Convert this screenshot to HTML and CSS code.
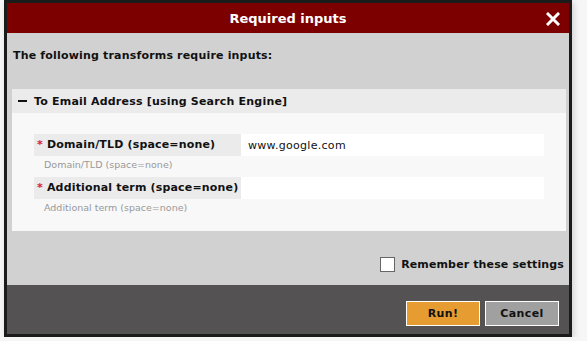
FILE: index.html
```html
<!DOCTYPE html>
<html lang="en">
<head>
  <meta charset="UTF-8" />
  <title>Required inputs</title>
  <link rel="stylesheet" href="styles.css">
</head>
<body>
  <div class="dialog">
    <div class="dialog-header">
      <span class="dialog-title">Required inputs</span>
      <svg class="dialog-close" width="14" height="14" viewBox="0 0 14 14">
        <path d="M2 2 L12 12 M12 2 L2 12" stroke="#fff" stroke-width="3" stroke-linecap="square" />
      </svg>
    </div>

    <div class="dialog-body">
      <p class="intro">The following transforms require inputs:</p>

      <div class="panel">
        <div class="panel-head"><span class="toggle"></span>To Email Address [using Search Engine]</div>
        <div class="panel-body">
          <div class="field">
            <div class="field-row">
              <label class="field-label" for="domain"><span class="req">*</span> Domain/TLD (space=none)</label>
              <input class="field-input" id="domain" type="text" value="www.google.com">
            </div>
            <div class="field-help">Domain/TLD (space=none)</div>
          </div>
          <div class="field">
            <div class="field-row">
              <label class="field-label" for="term"><span class="req">*</span> Additional term (space=none)</label>
              <input class="field-input" id="term" type="text" value="">
            </div>
            <div class="field-help">Additional term (space=none)</div>
          </div>
        </div>
      </div>

      <div class="remember">
        <span class="checkbox"></span>
        <span>Remember these settings</span>
      </div>
    </div>

    <div class="dialog-footer">
      <button class="btn btn-run">Run!</button>
      <button class="btn btn-cancel">Cancel</button>
    </div>
  </div>
</body>
</html>
```

FILE: styles.css
```css
body {
  margin: 0;
  background-color: #f6f6f6;
  font-family: 'DejaVu Sans', Verdana, sans-serif;
  color: #111;
}
.dialog {
  width: 562px;
  height: 331px;
  margin: 0 0 0 4px;
  border: 3px solid #1b1b1b;
  display: flex;
  flex-direction: column;
  box-shadow: 2px 2px 6px rgba(0, 0, 0, 0.15);
}
.dialog-header {
  height: 30px;
  background-color: #7c0000;
  color: #fff;
  display: flex;
  align-items: center;
  justify-content: center;
  position: relative;
}
.dialog-title {
  font-size: 13px;
  font-weight: bold;
}
.dialog-close {
  position: absolute;
  right: 9px;
  top: 9px;
}
.dialog-body {
  flex: 1;
  background-color: #d1d1d1;
  padding: 0 3px 0 5px;
  display: flex;
  flex-direction: column;
}
.intro {
  margin: 16px 0 0 1px;
  height: 40px;
  font-size: 11px;
  font-weight: bold;
  letter-spacing: 0.18px;
}
.panel {
  background-color: #f8f8f8;
  height: 142px;
}
.panel-head {
  height: 24px;
  background-color: #ebebeb;
  display: flex;
  align-items: center;
  padding-left: 6px;
  font-size: 11px;
  font-weight: bold;
  letter-spacing: 0.2px;
}
.toggle {
  width: 9px;
  height: 2px;
  background-color: #111;
  margin-right: 7px;
}
.panel-body {
  padding: 21px 22px 0 22px;
}
.field {
  margin-bottom: 7px;
}
.field-row {
  display: flex;
  height: 22px;
}
.field-label {
  flex-shrink: 0;
  width: 207px;
  background-color: #ebebeb;
  padding-left: 3px;
  box-sizing: border-box;
  line-height: 22px;
  font-size: 11px;
  font-weight: bold;
  letter-spacing: 0.17px;
  white-space: nowrap;
}
.req {
  color: #d8242a;
}
.field-input {
  flex: 1;
  min-width: 0;
  border: none;
  background-color: #fff;
  padding: 0 7px;
  font-family: inherit;
  font-size: 11px;
  letter-spacing: 0.3px;
  color: #111;
  outline: none;
}
.field-help {
  padding: 3px 0 0 10px;
  height: 11px;
  font-size: 9.5px;
  color: #999;
}
.remember {
  margin-top: 26px;
  align-self: flex-end;
  display: flex;
  align-items: center;
  font-size: 11px;
  font-weight: bold;
  letter-spacing: 0.13px;
  margin-right: 2px;
}
.checkbox {
  width: 13px;
  height: 13px;
  border: 1px solid #666;
  background-color: #fff;
  margin-right: 6px;
}
.dialog-footer {
  height: 49px;
  background-color: #545252;
  display: flex;
  justify-content: flex-end;
  align-items: flex-start;
  padding: 16px 10px 0 0;
  box-sizing: border-box;
  gap: 5px;
}
.btn {
  width: 74px;
  height: 25px;
  border: 1px solid #fff;
  font-family: inherit;
  font-size: 11px;
  font-weight: bold;
  letter-spacing: 0.4px;
  color: #111;
  cursor: pointer;
}
.btn-run {
  background-color: #e69c30;
}
.btn-cancel {
  background-color: #a0a0a0;
}
```
